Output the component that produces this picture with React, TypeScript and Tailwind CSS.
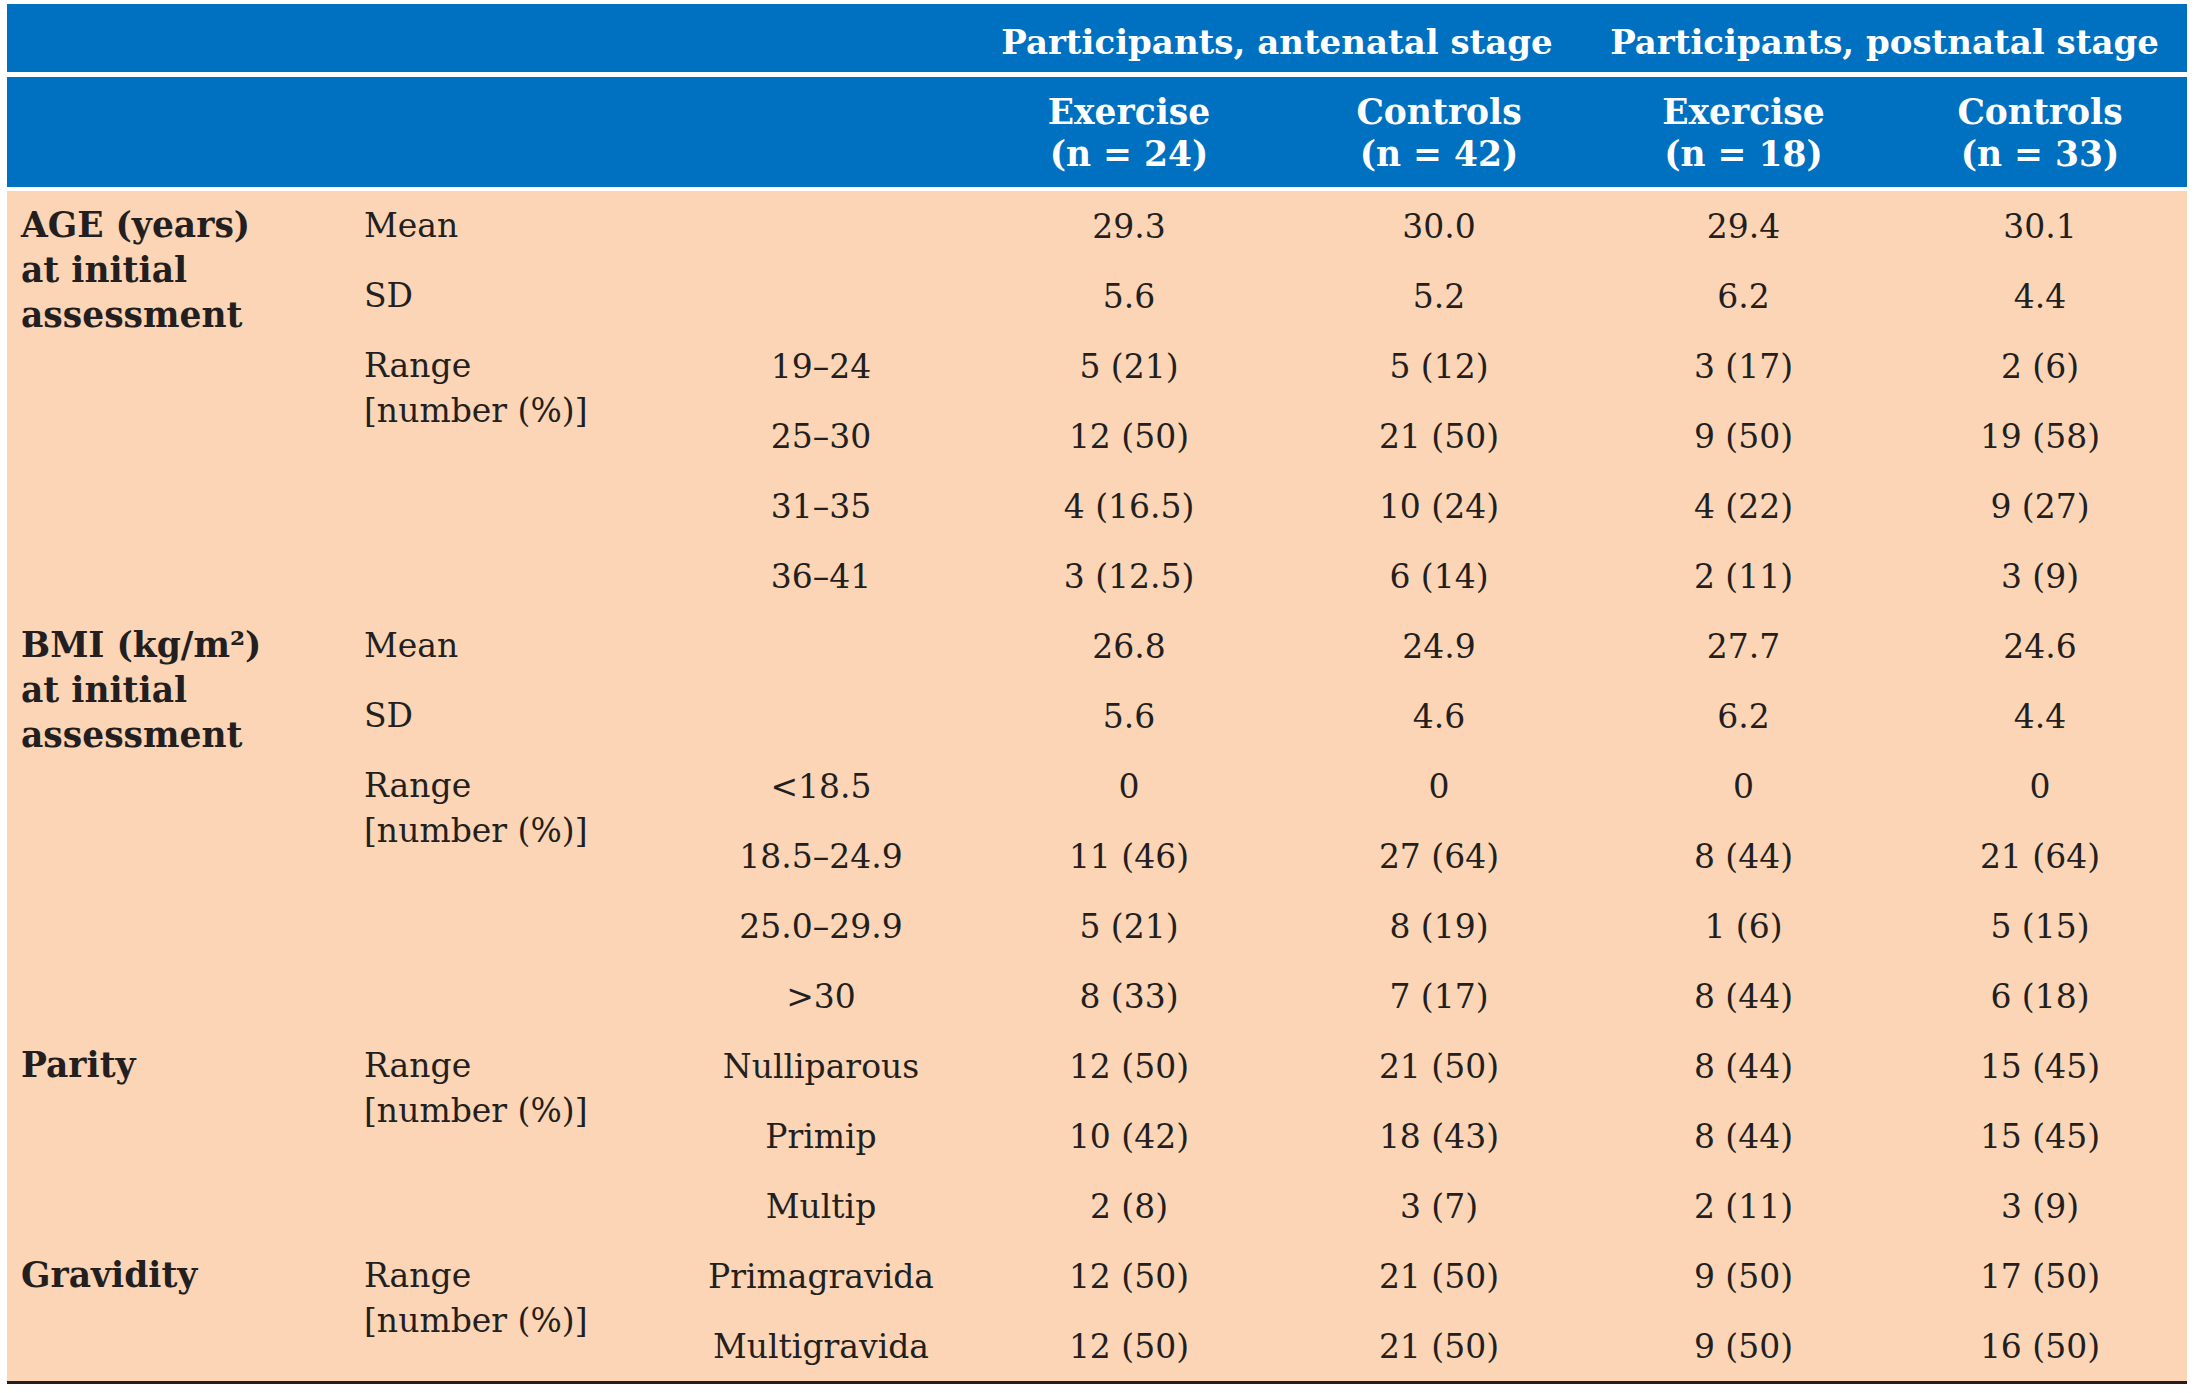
import React from "react";

type Sub = { label: string[]; rows: { cat: string; vals: string[] }[] };
type Group = { title: string[]; subs: Sub[] };

const groups: Group[] = [
  {
    title: ["AGE (years)", "at initial", "assessment"],
    subs: [
      { label: ["Mean"], rows: [{ cat: "", vals: ["29.3", "30.0", "29.4", "30.1"] }] },
      { label: ["SD"], rows: [{ cat: "", vals: ["5.6", "5.2", "6.2", "4.4"] }] },
      {
        label: ["Range", "[number (%)]"],
        rows: [
          { cat: "19–24", vals: ["5 (21)", "5 (12)", "3 (17)", "2 (6)"] },
          { cat: "25–30", vals: ["12 (50)", "21 (50)", "9 (50)", "19 (58)"] },
          { cat: "31–35", vals: ["4 (16.5)", "10 (24)", "4 (22)", "9 (27)"] },
          { cat: "36–41", vals: ["3 (12.5)", "6 (14)", "2 (11)", "3 (9)"] },
        ],
      },
    ],
  },
  {
    title: ["BMI (kg/m²)", "at initial", "assessment"],
    subs: [
      { label: ["Mean"], rows: [{ cat: "", vals: ["26.8", "24.9", "27.7", "24.6"] }] },
      { label: ["SD"], rows: [{ cat: "", vals: ["5.6", "4.6", "6.2", "4.4"] }] },
      {
        label: ["Range", "[number (%)]"],
        rows: [
          { cat: "<18.5", vals: ["0", "0", "0", "0"] },
          { cat: "18.5–24.9", vals: ["11 (46)", "27 (64)", "8 (44)", "21 (64)"] },
          { cat: "25.0–29.9", vals: ["5 (21)", "8 (19)", "1 (6)", "5 (15)"] },
          { cat: ">30", vals: ["8 (33)", "7 (17)", "8 (44)", "6 (18)"] },
        ],
      },
    ],
  },
  {
    title: ["Parity"],
    subs: [
      {
        label: ["Range", "[number (%)]"],
        rows: [
          { cat: "Nulliparous", vals: ["12 (50)", "21 (50)", "8 (44)", "15 (45)"] },
          { cat: "Primip", vals: ["10 (42)", "18 (43)", "8 (44)", "15 (45)"] },
          { cat: "Multip", vals: ["2 (8)", "3 (7)", "2 (11)", "3 (9)"] },
        ],
      },
    ],
  },
  {
    title: ["Gravidity"],
    subs: [
      {
        label: ["Range", "[number (%)]"],
        rows: [
          { cat: "Primagravida", vals: ["12 (50)", "21 (50)", "9 (50)", "17 (50)"] },
          { cat: "Multigravida", vals: ["12 (50)", "21 (50)", "9 (50)", "16 (50)"] },
        ],
      },
    ],
  },
];

const font = { fontFamily: '"DejaVu Serif", serif' };

export default function App() {
  return (
    <div className="w-[2194px] min-h-[1393px] bg-white pt-[4px] px-[7px] text-[#231f20]" style={font}>
      <div className="w-[2180px]">
        {/* Header row 1 */}
        <div className="flex h-[68px] bg-[#0070c0] text-white font-bold text-[34px] leading-[40px]">
          <div className="w-[967px]" />
          <div className="w-[620px] flex items-center justify-center pt-[7px] pr-[14px]">
            Participants, antenatal stage
          </div>
          <div className="w-[593px] flex items-center justify-center pt-[7px] pr-[12px]">
            Participants, postnatal stage
          </div>
        </div>
        <div className="h-[5px] bg-white" />
        {/* Header row 2 */}
        <div className="flex h-[110px] bg-[#0070c0] text-white font-bold text-[34.5px] leading-[42px]">
          <div className="w-[967px]" />
          {[
            ["Exercise", "(n = 24)", "w-[310px]"],
            ["Controls", "(n = 42)", "w-[310px]"],
            ["Exercise", "(n = 18)", "w-[299px]"],
            ["Controls", "(n = 33)", "w-[294px]"],
          ].map(([a, b, w], i) => (
            <div key={i} className={`${w} flex flex-col items-center justify-center pt-[2px]`}>
              <span>{a}</span>
              <span>{b}</span>
            </div>
          ))}
        </div>
        <div className="h-[4px] bg-white" />
        {/* Body */}
        <div className="bg-[#fbd5b5] border-b-[3px] border-[#231f20] text-[33px]">
          {groups.map((g, gi) => (
            <div key={gi} className="flex">
              <div className="w-[343px] pl-[14px] pt-[12px] font-bold text-[34.5px] leading-[45px]">
                {g.title.map((t, ti) => (
                  <div key={ti}>{t}</div>
                ))}
              </div>
              <div className="flex flex-col">
                {g.subs.map((s, si) => (
                  <div key={si} className="flex">
                    <div className="w-[318px] pl-[14px] pt-[12px] leading-[45px]">
                      {s.label.map((l, li) => (
                        <div key={li}>{l}</div>
                      ))}
                    </div>
                    <div className="flex flex-col">
                      {s.rows.map((r, ri) => (
                        <div
                          key={ri}
                          className="grid grid-cols-[306px_310px_310px_299px_294px] h-[70px] items-center text-center leading-[45px]"
                        >
                          <div>{r.cat}</div>
                          {r.vals.map((v, vi) => (
                            <div key={vi}>{v}</div>
                          ))}
                        </div>
                      ))}
                    </div>
                  </div>
                ))}
              </div>
            </div>
          ))}
        </div>
      </div>
    </div>
  );
}
